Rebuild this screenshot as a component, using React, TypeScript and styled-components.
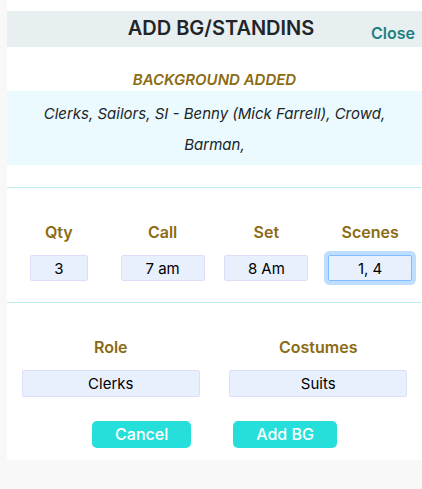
import React from "react";
import styled, { createGlobalStyle } from "styled-components";

const GlobalStyle = createGlobalStyle`
  *, *::before, *::after { box-sizing: border-box; }
  body {
    margin: 0;
    background: #f8f8f8;
    color: #212529;
    font-family: Inter, "Open Sans", sans-serif;
    font-size: 15px;
    line-height: 24px;
  }
  button, input { font: inherit; }
`;

const Panel = styled.main`
  margin-left: 7px;
  padding: 11px 0 12px;
  background: #ffffff;
`;

const Header = styled.header`
  display: grid;
  grid-template-columns: 1fr auto 1fr;
  height: 36px;
  padding: 0 7px 0 20px;
  background: #e7eff1;
`;

const Title = styled.h1`
  grid-column: 2;
  margin: 0;
  font-size: 20px;
  font-weight: 600;
  line-height: 34px;
`;

const CloseButton = styled.button`
  justify-self: end;
  align-self: end;
  padding: 0 0 2px;
  border: 0;
  background: none;
  color: #1f8080;
  font-size: 16px;
  font-weight: 600;
  cursor: pointer;
`;

const AddedSection = styled.section`
  padding: 21px 0 22px;
  border-bottom: 1px solid #bdeff2;
  text-align: center;
  font-style: italic;
`;

const AddedHeading = styled.h2`
  margin: 0;
  color: #8b6b14;
  font-size: 15px;
  font-weight: 600;
  line-height: 23px;
`;

const AddedList = styled.p`
  margin: 0;
  padding: 7px 24px 5px;
  background: #eafaff;
  line-height: 31px;
`;

const FieldRow = styled.div<{ $columns: number; $divided?: boolean }>`
  display: grid;
  grid-template-columns: repeat(${(p) => p.$columns}, 1fr);
  padding: ${(p) => (p.$divided ? "32px 0 21px" : "32px 0 24px")};
  border-bottom: ${(p) => (p.$divided ? "1px solid #bdeff2" : "0")};
`;

const Field = styled.div`
  display: flex;
  flex-direction: column;
  align-items: center;
  gap: 11px;
`;

const Label = styled.label`
  color: #8b6b14;
  font-size: 16px;
  font-weight: 600;
`;

const TextInput = styled.input<{ $width: string; $tall?: boolean; $active?: boolean }>`
  width: ${(p) => p.$width};
  height: ${(p) => (p.$tall ? 27 : 26)}px;
  padding: 0 4px;
  border: 1px solid ${(p) => (p.$active ? "#80bdff" : "#dcdff7")};
  border-radius: 2px;
  outline: 0;
  background: #e8f0fe;
  box-shadow: ${(p) => (p.$active ? "0 0 0 4px #bfdeff" : "none")};
  color: #000000;
  text-align: center;

  &:focus {
    border-color: #80bdff;
    box-shadow: 0 0 0 4px #bfdeff;
  }
`;

const Actions = styled.div`
  display: flex;
  justify-content: center;
  gap: 42px;
`;

const ActionButton = styled.button`
  height: 27px;
  padding: 0 23px;
  border: 0;
  border-radius: 5px;
  background: #26dfda;
  color: #ffffff;
  font-size: 16px;
  font-weight: 500;
  line-height: 27px;
  cursor: pointer;
`;

type FieldData = { id: string; label: string; value: string; width: string; active?: boolean };

const scheduleFields: FieldData[] = [
  { id: "qty", label: "Qty", value: "3", width: "56%" },
  { id: "call", label: "Call", value: "7 am", width: "81%" },
  { id: "set", label: "Set", value: "8 Am", width: "81%" },
  { id: "scenes", label: "Scenes", value: "1, 4", width: "81%", active: true },
];

const roleFields: FieldData[] = [
  { id: "role", label: "Role", value: "Clerks", width: "86%" },
  { id: "costumes", label: "Costumes", value: "Suits", width: "86%" },
];

function FormField({ field, tall }: { field: FieldData; tall?: boolean }) {
  return (
    <Field>
      <Label htmlFor={field.id}>{field.label}</Label>
      <TextInput
        id={field.id}
        type="text"
        defaultValue={field.value}
        $width={field.width}
        $tall={tall}
        $active={field.active}
      />
    </Field>
  );
}

export default function App() {
  return (
    <>
      <GlobalStyle />
      <Panel>
        <Header>
          <Title>ADD BG/STANDINS</Title>
          <CloseButton type="button">Close</CloseButton>
        </Header>
        <AddedSection>
          <AddedHeading>BACKGROUND ADDED</AddedHeading>
          <AddedList>Clerks, Sailors, SI - Benny (Mick Farrell), Crowd, Barman,</AddedList>
        </AddedSection>
        <form onSubmit={(e) => e.preventDefault()}>
          <FieldRow $columns={4} $divided>
            {scheduleFields.map((f) => (
              <FormField key={f.id} field={f} />
            ))}
          </FieldRow>
          <FieldRow $columns={2}>
            {roleFields.map((f) => (
              <FormField key={f.id} field={f} tall />
            ))}
          </FieldRow>
          <Actions>
            <ActionButton type="button">Cancel</ActionButton>
            <ActionButton type="submit">Add BG</ActionButton>
          </Actions>
        </form>
      </Panel>
    </>
  );
}
